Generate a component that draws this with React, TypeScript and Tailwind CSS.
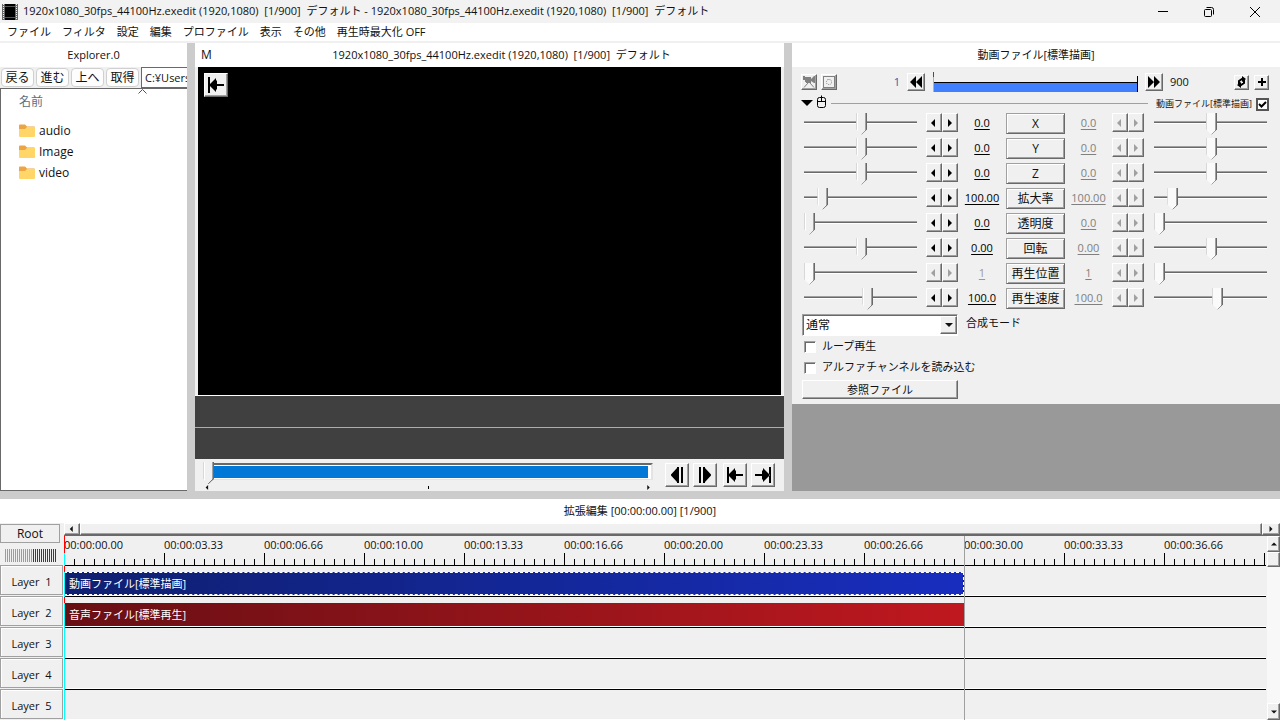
import { useState } from "react";
import type { ReactNode } from "react";

const RAISED =
    "border border-t-white border-l-white border-r-[#696969] border-b-[#696969] bg-[#f0f0f0] shadow-[inset_-1px_-1px_0_#a0a0a0]";
const SUNKEN =
    "border border-t-[#a0a0a0] border-l-[#a0a0a0] border-r-white border-b-white bg-white shadow-[inset_1px_1px_0_#696969]";

// The pointed trackbar handle
const THUMB =
    "appearance-none bg-transparent [&::-webkit-slider-thumb]:appearance-none [&::-webkit-slider-thumb]:w-[11px] [&::-webkit-slider-thumb]:h-[22px] [&::-webkit-slider-thumb]:[clip-path:polygon(0_0,100%_0,100%_76%,50%_100%,0_76%)] [&::-webkit-slider-thumb]:bg-[linear-gradient(135deg,transparent_79%,#696969_79%),linear-gradient(to_right,#d8d8d8_1px,#fff_1px,#fff_2px,#f0f0f0_2px,#f0f0f0_9px,#a0a0a0_9px,#a0a0a0_10px,#696969_10px)]";
const THUMB_DISABLED =
    "appearance-none bg-transparent [&::-webkit-slider-thumb]:appearance-none [&::-webkit-slider-thumb]:w-[11px] [&::-webkit-slider-thumb]:h-[22px] [&::-webkit-slider-thumb]:[clip-path:polygon(0_0,100%_0,100%_76%,50%_100%,0_76%)] [&::-webkit-slider-thumb]:bg-[linear-gradient(135deg,transparent_79%,#696969_79%),linear-gradient(to_right,#d8d8d8_1px,#fafafa_1px,#fafafa_9px,#a0a0a0_9px,#a0a0a0_10px,#696969_10px)]";

const menus = ["ファイル", "フィルタ", "設定", "編集", "プロファイル", "表示", "その他", "再生時最大化 OFF"];
const folders = ["audio", "Image", "video"];
const projectName = "1920x1080_30fps_44100Hz.exedit (1920,1080)  [1/900]  デフォルト";

const params = [
    { name: "X", value: "0.0", position: 51 },
    { name: "Y", value: "0.0", position: 51 },
    { name: "Z", value: "0.0", position: 51 },
    { name: "拡大率", value: "100.00", position: 13 },
    { name: "透明度", value: "0.0", position: 0 },
    { name: "回転", value: "0.00", position: 51 },
    { name: "再生位置", value: "1", position: 0, disabled: true },
    { name: "再生速度", value: "100.0", position: 57 },
];

const timecodes = [
    "00:00:00.00",
    "00:00:03.33",
    "00:00:06.66",
    "00:00:10.00",
    "00:00:13.33",
    "00:00:16.66",
    "00:00:20.00",
    "00:00:23.33",
    "00:00:26.66",
    "00:00:30.00",
    "00:00:33.33",
    "00:00:36.66",
    "",
];

function Triangle({ dir, size = "w-2 h-2" }: { dir: "left" | "right" | "up" | "down"; size?: string }) {
    const points = {
        left: "5,0 5,8 1,4",
        right: "2,0 2,8 6,4",
        up: "0,6 8,6 4,2",
        down: "0,2 8,2 4,6",
    };
    return (
        <svg viewBox="0 0 8 8" className={size} fill="currentColor">
            <polygon points={points[dir]} />
        </svg>
    );
}

function IconButton({ label, className, children }: { label: string; className: string; children: ReactNode }) {
    return (
        <button aria-label={label} className={`flex items-center justify-center shrink-0 ${RAISED} ${className}`}>
            {children}
        </button>
    );
}

function ToStartIcon() {
    return (
        <svg viewBox="0 0 18 18" className="w-[18px] h-[18px]">
            <path d="M1 1h2v16H1zM9 2v6h8v2H9v6L2.500 9.500v-1z" />
            <path d="M10 4v10L5 9z" />
        </svg>
    );
}

function PanelTitle({ children }: { children: ReactNode }) {
    return (
        <div className="h-6 shrink-0 bg-white flex items-center justify-center text-[11px] whitespace-pre">
            {children}
        </div>
    );
}

function TitleBar() {
    return (
        <header className="h-[23px] shrink-0 bg-[#f2f2f2] flex items-center pr-[2px]">
            <svg viewBox="0 0 16 16" className="w-4 h-4 ml-[2px] mr-[5px] shrink-0">
                <rect width="16" height="16" fill="#666" />
                <path d="M1.500 0v16M14.500 0v16" stroke="#eee" strokeDasharray="1 1" />
                <rect x="3" width="10" height="16" />
                <path d="M3 2.500h10M3 13.500h10" stroke="#555" />
            </svg>
            <h1 className="flex-1 text-[11px] whitespace-pre">
                {projectName} - {projectName}
            </h1>
            <button aria-label="最小化" className="w-[46px] h-full flex items-center justify-center">
                <svg viewBox="0 0 10 10" className="w-[10px] h-[10px]">
                    <path d="M0 4.500h10" stroke="#000" />
                </svg>
            </button>
            <button aria-label="元に戻す" className="w-[46px] h-full flex items-center justify-center">
                <svg viewBox="0 0 10 10" className="w-[10px] h-[10px]" fill="none" stroke="#000">
                    <rect x=".5" y="2.500" width="7" height="7" rx="1" />
                    <path d="M2.500 .5h5a2 2 0 0 1 2 2v5" />
                </svg>
            </button>
            <button aria-label="閉じる" className="w-[46px] h-full flex items-center justify-center">
                <svg viewBox="0 0 10 10" className="w-[10px] h-[10px]" stroke="#000">
                    <path d="M0 0l10 10M10 0L0 10" />
                </svg>
            </button>
        </header>
    );
}

function Explorer() {
    return (
        <section className="w-[187px] shrink-0 flex flex-col overflow-hidden">
            <PanelTitle>Explorer.0</PanelTitle>
            <div className="h-[21px] shrink-0 flex items-center bg-[#f0f0f0] pl-px gap-[2px] overflow-hidden">
                {["戻る", "進む", "上へ", "取得"].map((label) => (
                    <button
                        key={label}
                        className="w-[33px] h-[19px] shrink-0 rounded border border-[#d0d0d0] bg-[#fdfdfd] text-xs leading-none"
                    >
                        {label}
                    </button>
                ))}
                <input
                    aria-label="パス"
                    defaultValue="C:¥Users¥"
                    className="w-20 h-full shrink-0 bg-white border border-[#696969] px-[3px] text-[11px]"
                />
            </div>
            <div className="relative flex-1 bg-white border border-r-0 border-[#696969]">
                <svg viewBox="0 0 9 5" className="absolute left-[137px] top-0 w-[9px] h-[5px]" fill="none" stroke="#555">
                    <path d="M.5 4.500l4-4 4 4" />
                </svg>
                <div className="pl-[18px] pt-1 text-xs leading-[18px] text-[#56707f]">名前</div>
                <ul className="mt-[9px]">
                    {folders.map((name) => (
                        <li key={name} className="h-[21px] pl-[18px] flex items-center gap-1 text-xs">
                            <svg viewBox="0 0 16 14" className="w-4 h-[14px]">
                                <path d="M0 1.500Q0 .5 1 .5h5l2 2h7q1 0 1 1V8H0z" fill="#eba544" />
                                <path d="M0 5h6l2-2h8v9q0 1-1 1H1q-1 0-1-1z" fill="#ffd667" />
                            </svg>
                            {name}
                        </li>
                    ))}
                </ul>
            </div>
        </section>
    );
}

function Preview() {
    const [frame, setFrame] = useState(0);
    return (
        <section className="flex-1 min-w-0 flex flex-col bg-[#f0f0f0]">
            <div className="h-6 shrink-0 bg-white flex items-center text-[11px] whitespace-pre px-[6px]">
                <span className="w-6 text-xs">M</span>
                <h2 className="flex-1 text-center">{projectName}</h2>
            </div>
            <div className="flex-1 mx-[3px] bg-black p-[6px]">
                <IconButton label="先頭へ" className="w-6 h-6">
                    <ToStartIcon />
                </IconButton>
            </div>
            <div className="h-16 shrink-0 border-t border-white bg-[#404040] flex flex-col justify-center">
                <div className="h-px bg-[#4df04d]" />
            </div>
            <div className="h-8 shrink-0 flex items-start pl-2 pr-[9px]">
                <div className="relative flex-1 mr-3 pt-1">
                    <div className="h-[17px] ml-1 border-t-2 border-t-[#696969] border-r-2 border-r-[#e3e3e3] border-b border-b-[#e3e3e3] bg-white pt-px pb-px pr-[3px]">
                        <div className="h-full bg-[#0078d7]" />
                    </div>
                    <div className="flex items-center justify-between px-[2px] pt-[5px]">
                        <Triangle dir="left" size="w-[5px] h-[5px]" />
                        <span className="w-px h-[3px] bg-black" />
                        <Triangle dir="right" size="w-[5px] h-[5px]" />
                    </div>
                    <input
                        type="range"
                        aria-label="フレーム"
                        min={0}
                        max={900}
                        value={frame}
                        onChange={(e) => setFrame(Number(e.target.value))}
                        className={`absolute left-0 top-[2px] w-full h-6 ${THUMB}`}
                    />
                </div>
                <div className="flex gap-1 pt-1">
                    <IconButton label="前のフレーム" className="w-6 h-6">
                        <svg viewBox="0 0 18 18" className="w-[18px] h-[18px]">
                            <path d="M9 1h2v16H9zM9 2v14L3 9.500v-1zM13 1h2v16h-2z" />
                        </svg>
                    </IconButton>
                    <IconButton label="次のフレーム" className="w-6 h-6 mr-[2px]">
                        <svg viewBox="0 0 18 18" className="w-[18px] h-[18px]">
                            <path d="M3 1h2v16H3zM7 1h2v16H7zM9 2l6 6.500v1L9 16z" />
                        </svg>
                    </IconButton>
                    <IconButton label="先頭に移動" className="w-6 h-6">
                        <ToStartIcon />
                    </IconButton>
                    <IconButton label="最後に移動" className="w-6 h-6">
                        <svg viewBox="0 0 18 18" className="w-[18px] h-[18px]">
                            <path d="M15 1h2v16h-2zM9 2v6H1v2h8v6l6.500-6.500v-1z" />
                            <path d="M8 4v10l5-5z" />
                        </svg>
                    </IconButton>
                </div>
            </div>
        </section>
    );
}

function Spin({ disabled }: { disabled?: boolean }) {
    return (
        <div className={`flex shrink-0 mb-[2px] ${disabled ? "text-[#a0a0a0]" : "text-black"}`}>
            <IconButton label="減らす" className="w-4 h-[19px]">
                <Triangle dir="left" />
            </IconButton>
            <IconButton label="増やす" className="w-4 h-[19px]">
                <Triangle dir="right" />
            </IconButton>
        </div>
    );
}

function Slider({ label, initial, disabled }: { label: string; initial: number; disabled?: boolean }) {
    const [value, setValue] = useState(initial);
    return (
        <input
            type="range"
            aria-label={label}
            value={value}
            disabled={disabled}
            onChange={(e) => setValue(Number(e.target.value))}
            className={`flex-1 min-w-0 h-[22px] bg-[linear-gradient(#a0a0a0_1px,#696969_1px,#696969_2px,#fff_2px)] bg-[length:100%_3px] bg-[position:0_8px] bg-no-repeat ${
                disabled ? THUMB_DISABLED : THUMB
            }`}
        />
    );
}

function ParamRow({ param }: { param: (typeof params)[number] }) {
    return (
        <div className="h-[25px] flex items-center">
            <Slider label={`${param.name} 開始`} initial={param.position} disabled={param.disabled} />
            <div className="w-[9px]" />
            <Spin disabled={param.disabled} />
            <button
                className={`w-12 shrink-0 text-[11px] underline underline-offset-2 ${param.disabled ? "text-[#999]" : "text-black"}`}
            >
                {param.value}
            </button>
            <button className="w-[59px] h-[21px] shrink-0 border border-t-[#a0a0a0] border-l-[#a0a0a0] border-r-[#696969] border-b-[#696969] shadow-[inset_1px_1px_0_#fff,inset_-1px_-1px_0_#a0a0a0] text-xs leading-none">
                {param.name}
            </button>
            <button className="w-[47px] shrink-0 text-[11px] underline underline-offset-2 text-[#808080]">
                {param.value}
            </button>
            <Spin disabled />
            <div className="w-[10px]" />
            <Slider label={`${param.name} 終了`} initial={param.position} disabled />
        </div>
    );
}

function Settings() {
    const [enabled, setEnabled] = useState(true);
    return (
        <section className="w-[488px] shrink-0 flex flex-col bg-[#999]">
            <PanelTitle>動画ファイル[標準描画]</PanelTitle>
            <div className="bg-[#f0f0f0] pl-[9px] pr-[11px] pb-[5px]">
                <div className="h-[30px] flex items-center">
                    <IconButton label="カメラ制御" className="w-4 h-4 mr-1">
                        <svg viewBox="0 0 12 12" className="w-3 h-3" fill="#808080">
                            <path d="M0 0h2v1h6v2l3-3h1v7h-1L8 5v2H3V6H2V4H0z" />
                            <path d="M5 7L1 11.500M7 7l4 4.500" stroke="#808080" />
                        </svg>
                    </IconButton>
                    <IconButton label="クリッピング" className="w-4 h-4">
                        <svg viewBox="0 0 12 12" className="w-3 h-3" fill="none" stroke="#808080">
                            <rect x=".5" y=".5" width="11" height="11" />
                            <rect x="3.500" y="3.500" width="5" height="5" rx="2" strokeDasharray="1 1" />
                        </svg>
                    </IconButton>
                    <span className="w-[63px] text-right text-[11px] text-[#2b5fa8]">1</span>
                    <IconButton label="前の区間" className="w-[18px] h-[18px] ml-[7px] mr-2">
                        <svg viewBox="0 0 14 12" className="w-[14px] h-3">
                            <path d="M7 0v12L1 6zM13 0v12L7 6z" />
                        </svg>
                    </IconButton>
                    <div className="flex-1 h-5 flex items-end">
                        <div className="w-px h-full bg-[linear-gradient(#f00_5px,#0ff_5px)]" />
                        <div className="flex-1 h-[10px] border-t border-black bg-[#4080ff]" />
                        <div className="w-px h-4 bg-black" />
                    </div>
                    <IconButton label="次の区間" className="w-[18px] h-[18px] ml-[7px] mr-[7px]">
                        <svg viewBox="0 0 14 12" className="w-[14px] h-3">
                            <path d="M1 0v12l6-6zM7 0v12l6-6z" />
                        </svg>
                    </IconButton>
                    <span className="w-16 text-[11px]">900</span>
                    <IconButton label="更新" className="w-[15px] h-[15px] mr-[5px]">
                        <svg viewBox="0 0 12 12" className="w-3 h-3" fill="none" stroke="#000" strokeWidth="2">
                            <path d="M3 8V5l3-2h1M8 4v3L5 9H4" />
                            <path d="M6 0l4 3-4 3zM5 6L1 9l4 3z" fill="#000" stroke="none" />
                        </svg>
                    </IconButton>
                    <IconButton label="フィルタの追加" className="w-[15px] h-[15px]">
                        <svg viewBox="0 0 10 10" className="w-[10px] h-[10px]">
                            <path d="M4 1h2v3h3v2H6v3H4V6H1V4h3z" />
                        </svg>
                    </IconButton>
                </div>

                <div className="h-[14px] flex items-center">
                    <svg viewBox="0 0 12 6" className="w-3 h-[6px] mr-1 mb-[2px] shrink-0">
                        <path d="M0 0h12L6 6z" />
                    </svg>
                    <svg viewBox="0 0 10 14" className="w-[10px] h-[14px] mb-1 shrink-0" fill="none" stroke="#000">
                        <rect x=".5" y="2.500" width="8" height="10" rx="2" />
                        <path d="M.5 6.500h8M4.500 6.500v-6" />
                    </svg>
                    <div className="flex-1 h-px bg-[#a0a0a0] mb-[2px] ml-1 mr-2" />
                    <label htmlFor="enabled" className="text-[9px] mr-1 whitespace-nowrap">
                        動画ファイル[標準描画]
                    </label>
                    <span className="relative w-[13px] h-[13px] shrink-0">
                        <input
                            id="enabled"
                            type="checkbox"
                            checked={enabled}
                            onChange={() => setEnabled(!enabled)}
                            className="block appearance-none w-[13px] h-[13px] bg-white border-2 border-[#555]"
                        />
                        {enabled && (
                            <svg
                                viewBox="0 0 13 13"
                                className="absolute inset-0 pointer-events-none"
                                fill="none"
                                stroke="#000"
                                strokeWidth="2"
                            >
                                <path d="M3 6l2.500 2.500L10 4" />
                            </svg>
                        )}
                    </span>
                </div>

                <div className="pl-[3px] pr-[2px]">
                    {params.map((param) => (
                        <ParamRow key={param.name} param={param} />
                    ))}
                </div>

                <div className="flex items-center gap-2 pl-px pt-[3px]">
                    <div className="relative w-[156px]">
                        <select
                            id="blend"
                            className={`appearance-none block w-full h-[22px] px-[3px] text-xs leading-none ${SUNKEN}`}
                        >
                            <option>通常</option>
                        </select>
                        <span
                            className={`absolute right-px top-[2px] w-[17px] h-[18px] flex items-center justify-center pointer-events-none ${RAISED}`}
                        >
                            <Triangle dir="down" />
                        </span>
                    </div>
                    <label htmlFor="blend" className="text-[11px] pb-1">
                        合成モード
                    </label>
                </div>
                {["ループ再生", "アルファチャンネルを読み込む"].map((label) => (
                    <label key={label} className="h-[21px] pl-[3px] flex items-center gap-[6px] text-[11px]">
                        <input type="checkbox" className={`appearance-none w-3 h-3 ${SUNKEN}`} />
                        {label}
                    </label>
                ))}
                <button className={`mt-[2px] ml-px block w-[156px] h-[19px] text-[11px] leading-none ${RAISED}`}>
                    参照ファイル
                </button>
            </div>
        </section>
    );
}

function Clip({ title, selected }: { title: string; selected?: boolean }) {
    return (
        <div
            className={`w-[900px] h-[23px] mt-[6px] px-1 pt-[2px] flex items-center text-[11px] text-white ${
                selected
                    ? "border border-dashed border-white bg-linear-to-r from-[#0f1f70] to-[#182dbe]"
                    : "border border-transparent bg-linear-to-r from-[#680f14] to-[#c0181f] bg-origin-border"
            }`}
        >
            {title}
        </div>
    );
}

function Timeline() {
    return (
        <section className="h-[221px] shrink-0 flex flex-col bg-[#f0f0f0] overflow-hidden">
            <PanelTitle>拡張編集 [00:00:00.00] [1/900]</PanelTitle>
            <div className="flex-1 min-h-0 flex">
                <div className="w-[63px] shrink-0 mr-px">
                    <button className="mt-px block w-[60px] h-[19px] border border-[#a0a0a0] text-xs leading-none">
                        Root
                    </button>
                    <div className="mt-[6px] mb-[3px] ml-[5px] h-[13px] flex">
                        <div className="w-7 bg-[repeating-linear-gradient(to_right,#6ca6e8_0_1px,#f0f0f0_1px_2px)]" />
                        <div className="w-6 bg-[repeating-linear-gradient(to_right,#33338c_0_1px,#f0f0f0_1px_2px)]" />
                    </div>
                    {[1, 2, 3, 4, 5].map((n) => (
                        <button
                            key={n}
                            className="block w-[63px] h-[30px] mb-px pt-1 border border-[#a0a0a0] shadow-[inset_1px_1px_0_#fff] text-[11px] whitespace-pre"
                        >
                            {`Layer  ${n}`}
                        </button>
                    ))}
                </div>

                <div className="flex-1 min-w-0 flex flex-col">
                    <div className="h-[13px] shrink-0 flex border-b border-[#696969]">
                        <IconButton label="左へスクロール" className="w-4 h-3">
                            <Triangle dir="left" size="w-[6px] h-[6px]" />
                        </IconButton>
                        <div className={`flex-1 ${RAISED}`} />
                        <IconButton label="右へスクロール" className="w-[18px] h-3">
                            <Triangle dir="right" size="w-[6px] h-[6px]" />
                        </IconButton>
                    </div>
                    <div className="flex-1 min-h-0 flex">
                        <div className="relative flex-1 min-w-0 overflow-hidden">
                            <div className="h-[30px] flex border-b border-black">
                                {timecodes.map((time, i) => (
                                    <div key={i} className="w-[100px] h-[29px] shrink-0 flex flex-col justify-between">
                                        <span className="text-[11px] leading-[18px]">{time}</span>
                                        <div className="h-3 -mt-1 border-l border-black flex items-end">
                                            <div className="w-full h-[6px] bg-[repeating-linear-gradient(to_right,transparent_0_9px,#000_9px_10px)]" />
                                        </div>
                                    </div>
                                ))}
                            </div>
                            {[1, 2, 3, 4, 5].map((n) => (
                                <div key={n} className="h-[31px] border-b border-black shadow-[inset_0_-1px_0_#fff] overflow-hidden">
                                    {n === 1 && <Clip title="動画ファイル[標準描画]" selected />}
                                    {n === 2 && <Clip title="音声ファイル[標準再生]" />}
                                </div>
                            ))}
                            {/* playhead and end of project */}
                            <div className="absolute left-0 top-0 w-px h-full bg-[linear-gradient(#f00_17px,#0ff_17px,#0ff_30px,#f00_30px,#f00_36px,#0ff_36px,#0ff_61px,#f00_61px,#f00_67px,#0ff_67px)]" />
                            <div className="absolute left-[900px] top-0 w-px h-full bg-[#a0a0a0]" />
                        </div>
                        <div className="w-[13px] ml-px shrink-0 flex flex-col bg-[#f8f8f8]">
                            <IconButton label="上へスクロール" className="w-full h-4">
                                <Triangle dir="up" size="w-[6px] h-[6px]" />
                            </IconButton>
                            <div className={`h-[15px] ${RAISED}`} />
                            <div className="flex-1" />
                            <IconButton label="下へスクロール" className="w-full h-[17px]">
                                <Triangle dir="down" size="w-[6px] h-[6px]" />
                            </IconButton>
                        </div>
                    </div>
                </div>
            </div>
        </section>
    );
}

export default function App() {
    return (
        <div className="h-screen flex flex-col overflow-hidden bg-[#ccc] text-[#111] font-['Open_Sans','Noto_Sans_CJK_JP',sans-serif]">
            <TitleBar />
            <nav className="h-5 shrink-0 bg-white border-b-2 border-[#f0f0f0] flex items-center gap-[11px] px-[7px] text-[11px]">
                {menus.map((menu) => (
                    <button key={menu} className="whitespace-nowrap">
                        {menu}
                    </button>
                ))}
            </nav>
            <main className="flex-1 min-h-0 flex gap-2 mb-2">
                <Explorer />
                <Preview />
                <Settings />
            </main>
            <Timeline />
        </div>
    );
}
